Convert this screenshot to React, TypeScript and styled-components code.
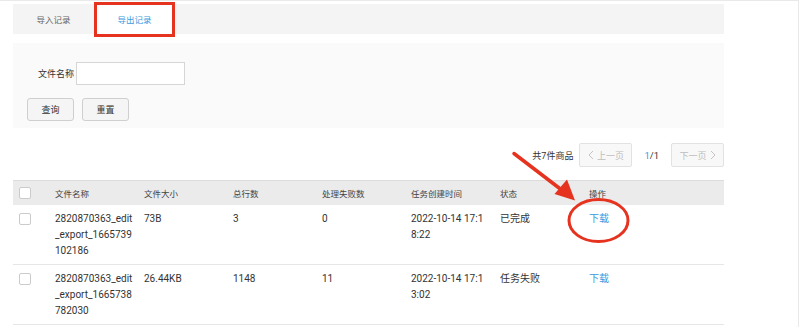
import React from "react";
import styled, { createGlobalStyle } from "styled-components";

const GlobalStyle = createGlobalStyle`
  html, body { margin: 0; padding: 0; background: #ffffff; }
  body { font-family: Roboto, "Noto Sans CJK SC", sans-serif; color: #333; }
  * { box-sizing: border-box; }
`;

const RED = "#e6331f";
const BLUE = "#3b98e0";

const Frame = styled.div`
  position: relative;
  width: 799px;
  height: 327px;
  border-top: 1px solid #e9e9e9;
  border-right: 1px solid #e9e9e9;
  overflow: hidden;
`;

const Content = styled.div`
  margin-left: 13px;
  width: 711px;
  padding-top: 3px;
`;

const TabBar = styled.div`
  display: flex;
  height: 30px;
  background: #f4f4f4;
`;

const Tab = styled.div<{ $active?: boolean }>`
  position: relative;
  width: 81px;
  display: flex;
  align-items: center;
  justify-content: center;
  font-size: 8.5px;
  color: ${(p) => (p.$active ? BLUE : "#666")};
  background: ${(p) => (p.$active ? "#ffffff" : "transparent")};
`;

const Highlight = styled.span`
  position: absolute;
  top: -2px;
  bottom: -3px;
  left: 0;
  right: 0;
  border: 3px solid ${RED};
  pointer-events: none;
`;

const FilterPanel = styled.div`
  margin-top: 9px;
  height: 85px;
  background: #fafafa;
  padding: 19px 0 0 14px;
`;

const FieldRow = styled.div`
  display: flex;
  align-items: center;
  padding-left: 11px;
`;

const Label = styled.label`
  font-size: 9px;
  color: #333;
  margin-right: 2px;
`;

const Input = styled.div`
  width: 109px;
  height: 23px;
  background: #fff;
  border: 1px solid #d6d6d6;
`;

const ButtonRow = styled.div`
  display: flex;
  gap: 8px;
  margin-top: 13px;
`;

const Button = styled.div`
  width: 47px;
  height: 23px;
  display: flex;
  align-items: center;
  justify-content: center;
  background: #f5f5f5;
  border: 1px solid #cfcfcf;
  border-radius: 3px;
  font-size: 9px;
  color: #333;
`;

const Pager = styled.div`
  margin-top: 15px;
  height: 24px;
  display: flex;
  justify-content: flex-end;
  align-items: center;
`;

const Total = styled.span`
  font-size: 9px;
  color: #333;
  margin-right: 6px;
`;

const PageButton = styled.div`
  width: 53px;
  height: 24px;
  display: flex;
  align-items: center;
  justify-content: center;
  gap: 3px;
  background: #f8f8f8;
  border: 1px solid #e2e2e2;
  border-radius: 2px;
  font-size: 9px;
  color: #bdbdbd;
`;

const PageNum = styled.span`
  font-size: 9.5px;
  color: #333;
  margin: 0 12px;
  b { font-weight: normal; color: ${BLUE}; }
`;

const Table = styled.div`
  margin-top: 13px;
`;

const Cols = `
  display: grid;
  grid-template-columns: 32px repeat(6, 89px) 1fr;
`;

const HeadRow = styled.div`
  ${Cols}
  height: 25px;
  align-items: center;
  background: #ebebeb;
  border-top: 1px solid #dcdcdc;
  font-size: 8.5px;
  color: #444;
`;

const BodyRow = styled.div`
  ${Cols}
  height: 60px;
  padding-top: 6px;
  border-bottom: 1px solid #e6e6e6;
  font-size: 10px;
  line-height: 16px;
  color: #333;
  align-items: start;
`;

const CheckCell = styled.div`
  display: flex;
  align-items: center;
  height: 16px;
  padding-left: 6px;
`;

const Box = styled.span`
  width: 12px;
  height: 12px;
  border: 1px solid #cbcbcb;
  border-radius: 2px;
  background: #fff;
`;

const Cell = styled.div`
  padding-left: 10px;
`;

const Line = styled.div`
  white-space: nowrap;
`;

const Link = styled.span`
  color: ${BLUE};
`;

const Overlay = styled.svg`
  position: absolute;
  top: 0;
  left: 0;
  pointer-events: none;
`;

const Chevron = ({ dir }: { dir: "left" | "right" }) => (
  <svg width="6" height="10" viewBox="0 0 6 10">
    <path
      d={dir === "left" ? "M5 1 L1 5 L5 9" : "M1 1 L5 5 L1 9"}
      fill="none"
      stroke="#c4c4c4"
      strokeWidth="1"
    />
  </svg>
);

const rows = [
  {
    name: ["2820870363_edit", "_export_1665739", "102186"],
    size: "73B",
    total: "3",
    failed: "0",
    time: ["2022-10-14 17:1", "8:22"],
    status: "已完成",
  },
  {
    name: ["2820870363_edit", "_export_1665738", "782030"],
    size: "26.44KB",
    total: "1148",
    failed: "11",
    time: ["2022-10-14 17:1", "3:02"],
    status: "任务失败",
  },
];

export default function App() {
  return (
    <>
      <GlobalStyle />
      <Frame>
        <Content>
          <TabBar>
            <Tab>导入记录</Tab>
            <Tab $active>
              导出记录
              <Highlight />
            </Tab>
          </TabBar>
          <FilterPanel>
            <FieldRow>
              <Label>文件名称</Label>
              <Input />
            </FieldRow>
            <ButtonRow>
              <Button>查询</Button>
              <Button>重置</Button>
            </ButtonRow>
          </FilterPanel>
          <Pager>
            <Total>共7件商品</Total>
            <PageButton>
              <Chevron dir="left" />
              上一页
            </PageButton>
            <PageNum>
              <b>1</b>/1
            </PageNum>
            <PageButton>
              下一页
              <Chevron dir="right" />
            </PageButton>
          </Pager>
          <Table>
            <HeadRow>
              <CheckCell>
                <Box />
              </CheckCell>
              <Cell>文件名称</Cell>
              <Cell>文件大小</Cell>
              <Cell>总行数</Cell>
              <Cell>处理失败数</Cell>
              <Cell>任务创建时间</Cell>
              <Cell>状态</Cell>
              <Cell>操作</Cell>
            </HeadRow>
            {rows.map((r, i) => (
              <BodyRow key={i}>
                <CheckCell>
                  <Box />
                </CheckCell>
                <Cell>
                  {r.name.map((l, j) => (
                    <Line key={j}>{l}</Line>
                  ))}
                </Cell>
                <Cell>{r.size}</Cell>
                <Cell>{r.total}</Cell>
                <Cell>{r.failed}</Cell>
                <Cell>
                  {r.time.map((l, j) => (
                    <Line key={j}>{l}</Line>
                  ))}
                </Cell>
                <Cell>{r.status}</Cell>
                <Cell>
                  <Link>下载</Link>
                </Cell>
              </BodyRow>
            ))}
          </Table>
        </Content>
        <Overlay width="799" height="327" viewBox="0 0 799 327">
          <line x1="514" y1="152.5" x2="563" y2="190" stroke={RED} strokeWidth="3.5" strokeLinecap="round" />
          <polygon points="575,199.5 554.5,193 567,178.5" fill={RED} />
          <ellipse cx="598.5" cy="219.5" rx="29.5" ry="21" fill="none" stroke={RED} strokeWidth="3" />
        </Overlay>
      </Frame>
    </>
  );
}
